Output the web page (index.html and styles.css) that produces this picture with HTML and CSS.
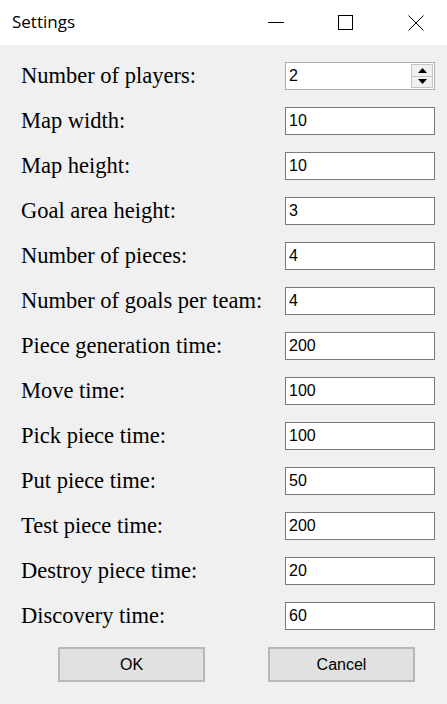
FILE: index.html
```html
<!DOCTYPE html>
<html>
<head>
<meta charset="utf-8">
<link rel="stylesheet" href="styles.css">
</head>
<body>
<div class="titlebar">
  <span class="title">Settings</span>
  <div class="controls">
    <svg class="ctl" width="16" height="16" viewBox="0 0 16 16"><line x1="0" y1="7.5" x2="16" y2="7.5" stroke="#000" stroke-width="1"/></svg>
    <svg class="ctl" width="16" height="16" viewBox="0 0 16 16"><rect x="0.5" y="0.5" width="14" height="14" fill="none" stroke="#000" stroke-width="1"/></svg>
    <svg class="ctl" width="16" height="16" viewBox="0 0 16 16"><path d="M0.5 0.5 L15.5 15.5 M15.5 0.5 L0.5 15.5" stroke="#000" stroke-width="1"/></svg>
  </div>
</div>
<div class="content">
  <div class="row"><span class="label">Number of players:</span>
    <div class="spin"><span class="val">2</span>
      <div class="spinbtns">
        <div class="sb"><svg width="9" height="5" viewBox="0 0 9 5"><polygon points="4.5,0 9,5 0,5" fill="#000"/></svg></div>
        <div class="sb"><svg width="9" height="5" viewBox="0 0 9 5"><polygon points="0,0 9,0 4.5,5" fill="#000"/></svg></div>
      </div>
    </div>
  </div>
  <div class="row"><span class="label">Map width:</span><div class="box">10</div></div>
  <div class="row"><span class="label">Map height:</span><div class="box">10</div></div>
  <div class="row"><span class="label">Goal area height:</span><div class="box">3</div></div>
  <div class="row"><span class="label">Number of pieces:</span><div class="box">4</div></div>
  <div class="row"><span class="label">Number of goals per team:</span><div class="box">4</div></div>
  <div class="row"><span class="label">Piece generation time:</span><div class="box">200</div></div>
  <div class="row"><span class="label">Move time:</span><div class="box">100</div></div>
  <div class="row"><span class="label">Pick piece time:</span><div class="box">100</div></div>
  <div class="row"><span class="label">Put piece time:</span><div class="box">50</div></div>
  <div class="row"><span class="label">Test piece time:</span><div class="box">200</div></div>
  <div class="row"><span class="label">Destroy piece time:</span><div class="box">20</div></div>
  <div class="row"><span class="label">Discovery time:</span><div class="box">60</div></div>
  <div class="buttons">
    <div class="btn">OK</div>
    <div class="btn">Cancel</div>
  </div>
</div>
</body>
</html>
```
FILE: styles.css
```css
html, body {
  margin: 0;
  padding: 0;
  background: #f0f0f0;
  width: 447px;
  height: 704px;
  overflow: hidden;
}
.titlebar {
  height: 45px;
  background: #fff;
  display: flex;
  align-items: center;
  justify-content: space-between;
}
.title {
  font-family: "Open Sans", sans-serif;
  font-size: 17px;
  color: #000;
  margin-left: 12px;
  margin-top: -2px;
}
.controls {
  display: flex;
  align-items: center;
  gap: 54px;
  margin-right: 23px;
}
.ctl { display: block; }
.content {
  padding: 17px 12px 0 21px;
  display: flex;
  flex-direction: column;
  gap: 17px;
}
.row {
  height: 28px;
  display: flex;
  align-items: center;
  justify-content: space-between;
}
.label {
  font-family: "Liberation Serif", serif;
  font-size: 22.5px;
  color: #000;
  white-space: nowrap;
}
.box, .spin {
  box-sizing: border-box;
  width: 150px;
  height: 28px;
  background: #fff;
  border: 1px solid #7a7a7a;
  font-family: "Liberation Sans", sans-serif;
  font-size: 16px;
  color: #000;
  padding-left: 3px;
  display: flex;
  align-items: center;
}
.spin {
  border-color: #adadad;
  justify-content: space-between;
  padding-right: 1px;
}
.spinbtns {
  display: flex;
  flex-direction: column;
  width: 22px;
  height: 24px;
}
.sb {
  flex: 1;
  box-sizing: border-box;
  border: 1px solid #c4c4c4;
  background: #f0f0f0;
  display: flex;
  align-items: center;
  justify-content: center;
}
.sb + .sb { border-top: none; }
.sb svg { display: block; }
.buttons {
  display: flex;
  justify-content: space-between;
  padding: 0 20px 0 37px;
}
.btn {
  box-sizing: border-box;
  width: 147px;
  height: 35px;
  background: #e1e1e1;
  border: 2px solid #b8b8b8;
  font-family: "Liberation Sans", sans-serif;
  font-size: 16px;
  color: #000;
  display: flex;
  align-items: center;
  justify-content: center;
}
```
